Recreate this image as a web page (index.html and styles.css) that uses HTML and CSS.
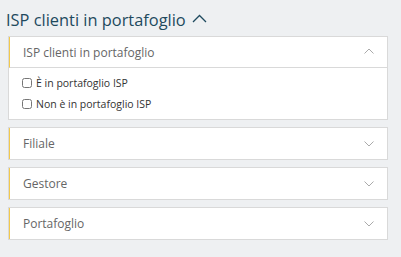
FILE: index.html
```html
<!DOCTYPE html>
<html lang="it">
<head>
    <meta charset="UTF-8">
    <meta name="viewport" content="width=device-width, initial-scale=1.0">
    <title>Filtri</title>
    <link rel="stylesheet" href="styles.css">
</head>
<body>
    <div class="filters">
        <h2 class="filters-title">ISP clienti in portafoglio
            <svg class="title-chev" width="15" height="9" viewBox="0 0 15 9"><path d="M1 8 L7.5 1.5 L14 8" fill="none" stroke="#1e4a5e" stroke-width="1.3"/></svg>
        </h2>

        <div class="panel open">
            <div class="panel-head">
                <span>ISP clienti in portafoglio</span>
                <svg class="chev" width="10" height="6" viewBox="0 0 10 6"><path d="M0.5 5.5 L5 1 L9.5 5.5" fill="none" stroke="#aaa" stroke-width="1"/></svg>
            </div>
            <div class="panel-body">
                <label class="check"><input type="checkbox"> È in portafoglio ISP</label>
                <label class="check"><input type="checkbox"> Non è in portafoglio ISP</label>
            </div>
        </div>

        <div class="panel">
            <div class="panel-head">
                <span>Filiale</span>
                <svg class="chev" width="10" height="6" viewBox="0 0 10 6"><path d="M0.5 0.5 L5 5 L9.5 0.5" fill="none" stroke="#aaa" stroke-width="1"/></svg>
            </div>
        </div>
        <div class="panel">
            <div class="panel-head">
                <span>Gestore</span>
                <svg class="chev" width="10" height="6" viewBox="0 0 10 6"><path d="M0.5 0.5 L5 5 L9.5 0.5" fill="none" stroke="#aaa" stroke-width="1"/></svg>
            </div>
        </div>
        <div class="panel">
            <div class="panel-head">
                <span>Portafoglio</span>
                <svg class="chev" width="10" height="6" viewBox="0 0 10 6"><path d="M0.5 0.5 L5 5 L9.5 0.5" fill="none" stroke="#aaa" stroke-width="1"/></svg>
            </div>
        </div>
    </div>
</body>
</html>
```

FILE: styles.css
```css
*{
    margin: 0;
    padding: 0;
    box-sizing: border-box;
}
body{
    background-color: #eef0f2;
    font-family: "Open Sans", "Noto Sans", sans-serif;
}
.filters{
    padding: 9px 13px 0 8px;
}
.filters-title{
    font-size: 16.4px;
    font-weight: 400;
    color: #1e4a5e;
    line-height: 22px;
    margin-left: -2px;
    display: flex;
    align-items: center;
    gap: 6px;
}
.title-chev{
    margin-top: -3px;
}
.panel{
    background-color: white;
    border: 1px solid #d9d9d9;
    margin-top: 7px;
}
.filters-title + .panel{
    margin-top: 5px;
}
.panel-head{
    height: 31px;
    display: flex;
    justify-content: space-between;
    align-items: center;
    padding: 0 13px 0 13px;
    border-left: 1px solid #f2c94c;
    font-size: 12px;
    color: #666;
}
.open .panel-head{
    border-bottom: 1px solid #d9d9d9;
}
.open .chev{
    margin-top: -2px;
}
.panel-body{
    padding: 7px 13px 7px;
    display: flex;
    flex-direction: column;
    gap: 5px;
}
.check{
    font-size: 10.5px;
    color: #333;
    display: flex;
    align-items: center;
    gap: 4px;
    height: 16px;
}
.check input{
    width: 10px;
    height: 10px;
    margin: 0;
}
```
